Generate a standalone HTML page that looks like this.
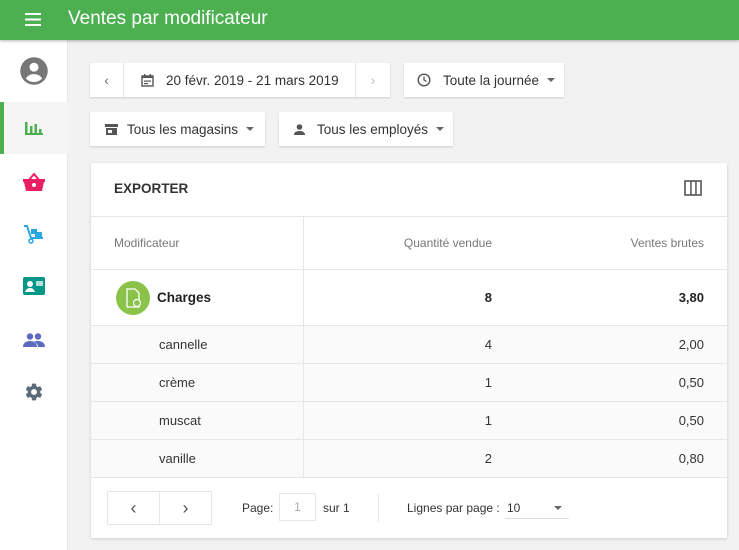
<!DOCTYPE html>
<html><head><style>
*{box-sizing:border-box;margin:0;padding:0}
body{width:739px;height:550px;overflow:hidden;background:#f2f2f2;font-family:"Liberation Sans",sans-serif;color:#333;position:relative;font-size:13px}
.hdr{position:absolute;left:0;top:0;width:739px;height:40px;background:#4caf50;color:#fff;box-shadow:0 1px 3px rgba(0,0,0,.3);z-index:2}
.hdr .t{position:absolute;left:68px;top:8px;font-size:19px}
.side{position:absolute;left:0;top:40px;width:68px;height:510px;background:#fff;border-right:1px solid #e6e6e6}
.ic{position:absolute;left:0;width:68px;display:flex;justify-content:center;align-items:center}
.btn{position:absolute;background:#fff;box-shadow:0 1px 2px rgba(0,0,0,.15);height:34px;display:flex;align-items:center;font-size:13.5px;color:#333}
.card{position:absolute;left:91px;top:163px;width:636px;height:375px;background:#fff;box-shadow:0 1px 3px rgba(0,0,0,.15)}
.row{position:absolute;left:0;width:636px;border-top:1px solid #e6e6e6}
.c{position:absolute;top:0;height:100%;display:flex;align-items:center}
.q{right:235px}.v{right:23px}
.caret{display:inline-block;border-left:4px solid transparent;border-right:4px solid transparent;border-top:4px solid #666;margin-left:8px}
</style></head><body>
<div class="hdr"><svg style="position:absolute;left:25px;top:13px" width="16" height="13"><rect y="0" width="16" height="2" fill="#fff"/><rect y="5.5" width="16" height="2" fill="#fff"/><rect y="11" width="16" height="2" fill="#fff"/></svg><div class="t">Ventes par modificateur</div></div>
<div class="side">
<div class="ic" style="top:14px;height:34px"><svg width="30" height="30" viewBox="0 0 24 24"><circle cx="12" cy="12" r="11" fill="#777"/><circle cx="12" cy="9" r="3.6" fill="#fff"/><path d="M5.5 18c1.5-2.5 4-3.5 6.5-3.5s5 1 6.5 3.5c-1.7 1.8-4 2.8-6.5 2.8s-4.8-1-6.5-2.8z" fill="#fff"/></svg></div>
<div style="position:absolute;left:0;top:62px;width:68px;height:52px;background:#f5f5f5"></div>
<div style="position:absolute;left:0;top:62px;width:4px;height:52px;background:#4caf50"></div>
<div class="ic" style="top:62px;height:52px"><svg width="18" height="14"><rect x="0" y="1" width="2.5" height="13" fill="#4caf50"/><rect x="0" y="12" width="18" height="2" fill="#4caf50"/><rect x="5" y="5" width="2.5" height="8" fill="#4caf50"/><rect x="9.5" y="3" width="2.5" height="10" fill="#4caf50"/><rect x="14" y="8" width="2.5" height="5" fill="#4caf50"/></svg></div>
<div class="ic" style="top:128px;height:28px"><svg width="22" height="18" viewBox="0 0 22 18"><path d="M6 7L11 1l5 6" stroke="#e91e63" stroke-width="2" fill="none"/><path d="M0 6h22v3h-1l-2 9H3L1 9H0z" fill="#e91e63"/><circle cx="11" cy="12" r="2" fill="#fff"/></svg></div>
<div class="ic" style="top:180px;height:28px"><svg width="22" height="20" viewBox="0 0 22 20"><path d="M1 2h3l4 12h12" stroke="#29a8e0" stroke-width="2" fill="none"/><rect x="8" y="5" width="6" height="5" fill="#29a8e0"/><rect x="12" y="8" width="7" height="5" fill="#29a8e0"/><circle cx="8" cy="17" r="2" fill="none" stroke="#29a8e0" stroke-width="1.5"/></svg></div>
<div class="ic" style="top:232px;height:28px"><svg width="22" height="18"><rect width="22" height="18" rx="2" fill="#009688"/><circle cx="7" cy="7" r="3" fill="#fff"/><path d="M2 15c1-3 3-4 5-4s4 1 5 4z" fill="#fff"/><rect x="13" y="4" width="7" height="5" fill="#fff" opacity=".7"/></svg></div>
<div class="ic" style="top:286px;height:28px"><svg width="22" height="14"><circle cx="7" cy="3.5" r="3.2" fill="#5c6bc0"/><circle cx="15" cy="3.5" r="3.2" fill="#5c6bc0"/><path d="M0 14c0-4 3-6 7-6s7 2 7 6z" fill="#5c6bc0"/><path d="M11 8.5c1-.4 2.5-.5 4-.5 4 0 7 2 7 6h-7c0-2-1.5-4-4-5.5z" fill="#5c6bc0"/></svg></div>
<div class="ic" style="top:338px;height:28px"><svg width="20" height="20" viewBox="0 0 24 24"><path fill="#5b6b78" d="M19.4 13c.04-.3.06-.6.06-1s-.02-.7-.06-1l2.1-1.6c.2-.15.25-.4.12-.64l-2-3.46c-.12-.22-.39-.3-.61-.22l-2.5 1c-.52-.4-1.08-.73-1.69-.98l-.38-2.65C14.46 2.18 14.25 2 14 2h-4c-.25 0-.46.18-.49.42l-.38 2.65c-.61.25-1.17.59-1.69.98l-2.49-1c-.23-.09-.49 0-.61.22l-2 3.46c-.13.22-.07.49.12.64L4.57 11c-.04.32-.07.65-.07 1s.03.68.07 1l-2.11 1.65c-.19.15-.24.42-.12.64l2 3.46c.12.22.39.3.61.22l2.49-1c.52.4 1.08.73 1.69.98l.38 2.65c.03.24.24.42.49.42h4c.25 0 .46-.18.49-.42l.38-2.65c.61-.25 1.17-.59 1.69-.98l2.49 1c.23.09.49 0 .61-.22l2-3.46c.12-.22.07-.49-.12-.64L19.4 13zM12 15.5c-1.93 0-3.5-1.57-3.5-3.5s1.57-3.5 3.5-3.5 3.5 1.57 3.5 3.5-1.57 3.5-3.5 3.5z"/></svg></div>
</div>

<div class="btn" style="left:90px;top:63px;width:300px">
<div style="width:34px;height:34px;border-right:1px solid #e6e6e6;display:flex;align-items:center;justify-content:center;color:#666">‹</div>
<div style="flex:1;display:flex;align-items:center;padding-left:17px"><svg width="13" height="13" viewBox="0 0 13 13"><rect x="1" y="2" width="11" height="10" fill="none" stroke="#555" stroke-width="1.4"/><rect x="1" y="2" width="11" height="2" fill="#555"/><rect x="3" y="6.5" width="7" height="1.2" fill="#555"/><rect x="3" y="9" width="4" height="1.2" fill="#555"/><rect x="3" y="0" width="1.4" height="3" fill="#555"/><rect x="8.6" y="0" width="1.4" height="3" fill="#555"/></svg><span style="margin-left:12px">20 févr. 2019 - 21 mars 2019</span></div>
<div style="width:35px;height:34px;border-left:1px solid #e6e6e6;display:flex;align-items:center;justify-content:center;color:#bbb">›</div>
</div>
<div class="btn" style="left:404px;top:63px;width:160px;padding-left:13px"><svg width="14" height="14"><circle cx="7" cy="7" r="5.8" fill="none" stroke="#555" stroke-width="1.4"/><path d="M7 3.5V7l2.5 1.5" stroke="#555" stroke-width="1.3" fill="none"/></svg><span style="margin-left:12px">Toute la journée</span><span class="caret"></span></div>
<div class="btn" style="left:90px;top:112px;width:175px;padding-left:15px"><svg width="13" height="11"><rect x="0" y="0" width="13" height="3" fill="#555"/><rect x="1" y="4" width="11" height="7" fill="#555"/><rect x="3" y="6" width="4" height="3" fill="#fff"/></svg><span style="margin-left:9px">Tous les magasins</span><span class="caret"></span></div>
<div class="btn" style="left:279px;top:112px;width:174px;padding-left:15px"><svg width="11" height="11"><circle cx="5.5" cy="3" r="2.8" fill="#555"/><path d="M0 11c0-3 2.5-4 5.5-4s5.5 1 5.5 4z" fill="#555"/></svg><span style="margin-left:12px">Tous les employés</span><span class="caret"></span></div>

<div class="card">
<div style="position:absolute;left:23px;top:18px;font-weight:bold;font-size:13.5px;color:#333">EXPORTER</div>
<svg style="position:absolute;left:593px;top:17px" width="18" height="16"><rect x="1" y="1" width="16" height="14" fill="none" stroke="#555" stroke-width="1.6"/><rect x="6.2" y="1" width="1.5" height="14" fill="#555"/><rect x="11.2" y="1" width="1.5" height="14" fill="#555"/></svg>
<div class="row" style="top:53px;height:53px;font-size:12px;color:#777"><div class="c" style="left:23px">Modificateur</div><div class="c q">Quantité vendue</div><div class="c v">Ventes brutes</div></div>
<div class="row" style="top:106px;height:56px;font-weight:bold;color:#222"><div class="c" style="left:25px"><svg width="34" height="34"><circle cx="17" cy="17" r="17" fill="#8bc34a"/><path d="M11 8h8l4 4v14H11z" fill="none" stroke="#fff" stroke-width="1.3"/><circle cx="21" cy="22" r="3.5" fill="#8bc34a" stroke="#fff" stroke-width="1.2"/></svg><span style="margin-left:7px;font-size:13.5px">Charges</span></div><div class="c q">8</div><div class="c v">3,80</div></div>
<div class="row" style="top:162px;height:38px;background:#fafafa"><div class="c" style="left:68px">cannelle</div><div class="c q">4</div><div class="c v">2,00</div></div>
<div class="row" style="top:200px;height:38px;background:#fafafa"><div class="c" style="left:68px">crème</div><div class="c q">1</div><div class="c v">0,50</div></div>
<div class="row" style="top:238px;height:38px;background:#fafafa"><div class="c" style="left:68px">muscat</div><div class="c q">1</div><div class="c v">0,50</div></div>
<div class="row" style="top:276px;height:38px;background:#fafafa"><div class="c" style="left:68px">vanille</div><div class="c q">2</div><div class="c v">0,80</div></div>
<div style="position:absolute;left:212px;top:53px;width:1px;height:261px;background:#e6e6e6"></div>
<div class="row" style="top:314px;height:61px;font-size:12px">
<div style="position:absolute;left:16px;top:13px;width:105px;height:34px;border:1px solid #e6e6e6;display:flex"><div style="width:52px;border-right:1px solid #e6e6e6;display:flex;align-items:center;justify-content:center;font-size:18px;color:#555">‹</div><div style="flex:1;display:flex;align-items:center;justify-content:center;font-size:18px;color:#555">›</div></div>
<div class="c" style="left:151px">Page:</div>
<div style="position:absolute;left:188px;top:15px;width:37px;height:28px;border:1px solid #e6e6e6;display:flex;align-items:center;justify-content:center;color:#aaa">1</div>
<div class="c" style="left:232px">sur 1</div>
<div style="position:absolute;left:287px;top:16px;width:1px;height:28px;background:#e6e6e6"></div>
<div class="c" style="left:316px">Lignes par page :</div>
<div class="c" style="left:416px">10</div>
<div style="position:absolute;left:414px;top:40px;width:64px;height:1px;background:#ddd"></div>
<span class="caret" style="position:absolute;left:455px;top:28px"></span>
</div>
</div>
</body></html>
